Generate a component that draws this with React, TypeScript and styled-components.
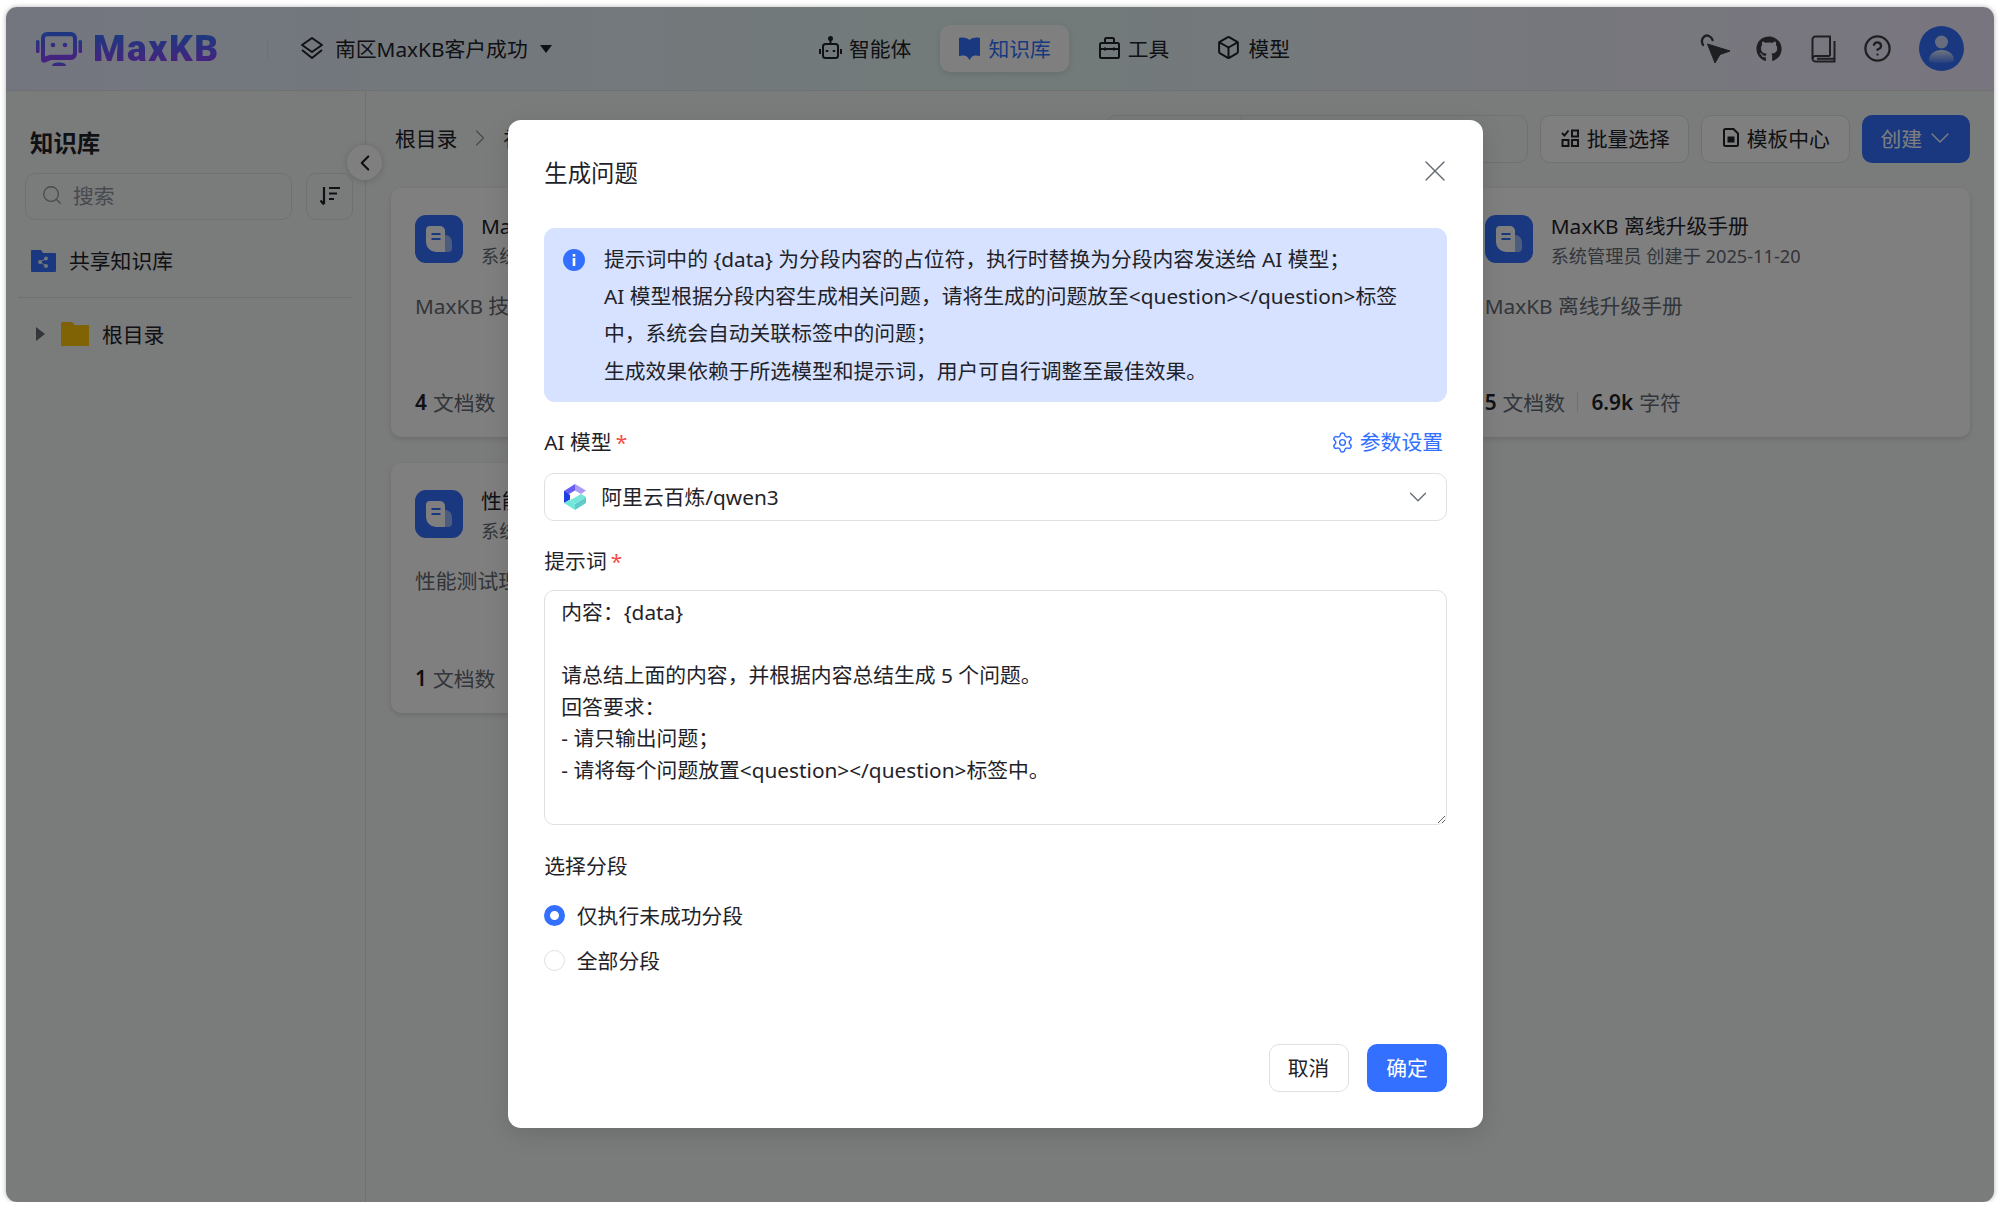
import React from "react";
import styled, { createGlobalStyle } from "styled-components";
import { FaGithub } from "react-icons/fa";
import { ChevronDown, ChevronLeft, ChevronRight, CircleHelp, Box, Search, Settings, X } from "lucide-react";

const Global = createGlobalStyle`
  html, body { margin: 0; padding: 0; background: #fff; }
  body { font-family: "Noto Sans", "Noto Sans CJK SC", sans-serif; color: #1f2329; font-size: 20.8px; }
  * { box-sizing: border-box; }
`;

const Frame = styled.div`
  position: relative;
  margin: 7px 6px 0;
  width: 1988px;
  height: 1195px;
  border-radius: 11px;
  overflow: hidden;
  background: #f5f6f7;
  box-shadow: 0 0 5px rgba(0, 0, 0, 0.3);
  display: flex;
  flex-direction: column;
`;

const Header = styled.header`
  height: 84px;
  flex: none;
  display: flex;
  align-items: center;
  padding: 0 30px;
  border-bottom: 1px solid #dee0e3;
  background: linear-gradient(90deg, #e8edff 0%, #e5f5f4 50%, #f3ebff 100%);
`;

const LogoMark = styled.svg`
  width: 46px;
  height: 34px;
  flex: none;
`;

const LogoText = styled.span`
  margin-left: 11px;
  width: 126px;
  font-family: Roboto, "Noto Sans", sans-serif;
  font-size: 37px;
  font-weight: 900;
  line-height: 40px;
  letter-spacing: 1.6px;
  white-space: nowrap;
  background: linear-gradient(180deg, #3a72ff 15%, #9640ff 90%);
  -webkit-background-clip: text;
  background-clip: text;
  color: transparent;
`;

const HeadDivider = styled.span`
  margin-left: 48px;
  width: 1px;
  height: 20px;
  background: #dee0e3;
`;

const Workspace = styled.div`
  margin-left: 32px;
  padding-bottom: 2px;
  display: flex;
  align-items: center;
  gap: 11px;
  width: 252px;
  white-space: nowrap;
`;

const Caret = styled.span`
  margin: 2px 0 0 1px;
  width: 0;
  height: 0;
  border-left: 6.5px solid transparent;
  border-right: 6.5px solid transparent;
  border-top: 8px solid #1f2329;
`;

const Nav = styled.nav`
  margin-left: 248.5px;
  display: flex;
  gap: 10px;
`;

const NavItem = styled.a<{ $active?: boolean }>`
  height: 47px;
  padding: 0 18.5px 2px;
  display: flex;
  align-items: center;
  gap: 7px;
  border-radius: 10px;
  white-space: nowrap;
  color: ${(p) => (p.$active ? "#3370ff" : "#1f2329")};
  background: ${(p) => (p.$active ? "#ffffff" : "transparent")};
  box-shadow: ${(p) => (p.$active ? "0 2px 6px rgba(31,35,41,.12)" : "none")};
`;

const NavIcon = styled.svg`
  width: 23px;
  height: 24px;
  flex: none;
`;

const HeadRight = styled.div`
  margin-left: auto;
  display: flex;
  align-items: center;
`;

const HeadIcon = styled.span<{ $gap: number }>`
  display: flex;
  margin-left: ${(p) => p.$gap}px;
  color: #3b3e43;
`;

const Avatar = styled.span`
  margin-left: 27px;
  width: 45px;
  height: 45px;
  border-radius: 50%;
  background: #3370ff;
  display: flex;
  overflow: hidden;
`;

const Body = styled.div`
  flex: 1;
  display: flex;
  min-height: 0;
`;

const Sidebar = styled.aside`
  position: relative;
  width: 360px;
  flex: none;
  padding: 37px 0 0;
  border-right: 1px solid #dee0e3;
`;

const SideTitle = styled.h2`
  margin: 0 0 15px 24px;
  font-size: 23.4px;
  line-height: 30px;
  font-weight: 700;
`;

const SearchRow = styled.div`
  display: flex;
  gap: 14px;
  padding-left: 19px;
`;

const SearchBox = styled.div`
  width: 267px;
  height: 46.5px;
  border: 1.3px solid #dee0e3;
  border-radius: 10px;
  display: flex;
  align-items: center;
  gap: 10px;
  padding: 0 0 2px 15px;
  color: #8f959e;
`;

const SortButton = styled.div`
  width: 47px;
  height: 46.5px;
  border: 1.3px solid #dee0e3;
  border-radius: 10px;
  display: flex;
  align-items: center;
  justify-content: center;
`;

const CollapseButton = styled.div`
  position: absolute;
  right: -17px;
  top: 54px;
  width: 35px;
  height: 35px;
  border-radius: 50%;
  background: #fff;
  box-shadow: 0 1px 6px rgba(31, 35, 41, 0.2);
  display: flex;
  align-items: center;
  justify-content: center;
  z-index: 1;
`;

const ShareRow = styled.div`
  margin-top: 21px;
  padding: 0 0 1px 25px;
  height: 40px;
  display: flex;
  align-items: center;
  gap: 13px;
`;

const SideDivider = styled.div`
  height: 1px;
  margin: 16px 12px 0;
  background: #dee0e3;
`;

const TreeRow = styled.div`
  margin-top: 16px;
  padding-left: 30px;
  height: 40px;
  display: flex;
  align-items: center;
`;

const TreeArrow = styled.span`
  width: 0;
  height: 0;
  border-top: 7px solid transparent;
  border-bottom: 7px solid transparent;
  border-left: 9px solid #646a73;
  margin-right: 16px;
`;

const FolderIcon = styled.svg`
  margin-right: 13px;
`;

const Main = styled.main`
  flex: 1;
  min-width: 0;
  padding: 24px 24px 0 25px;
`;

const Toolbar = styled.div`
  height: 47.5px;
  display: flex;
  align-items: center;
  margin-bottom: 25px;
`;

const Crumb = styled.div`
  margin-left: 4px;
  padding-bottom: 2px;
  display: flex;
  align-items: center;
  gap: 9px;
  white-space: nowrap;
`;

const ToolRight = styled.div`
  margin-left: auto;
  display: flex;
  gap: 12.5px;
`;

const FilterGroup = styled.div`
  width: 422px;
  height: 47.5px;
  border: 1.3px solid #dee0e3;
  border-radius: 10px;
  display: flex;
`;

const FilterLeft = styled.div`
  width: 135px;
  border-right: 1.3px solid #dee0e3;
`;

const ToolButton = styled.button`
  height: 47.5px;
  width: 148.5px;
  padding: 0 0 2px 2px;
  border: 1.3px solid #dee0e3;
  border-radius: 10px;
  background: #fff;
  display: flex;
  align-items: center;
  justify-content: center;
  gap: 8px;
  font: inherit;
  color: #1f2329;
`;

const CreateButton = styled.button`
  height: 47.5px;
  width: 108px;
  padding: 0 0 2px 18.5px;
  border: 0;
  border-radius: 10px;
  background: #3370ff;
  color: #fff;
  display: flex;
  align-items: center;
  justify-content: flex-start;
  gap: 2.4px;
  font: inherit;
`;

const CardGrid = styled.div`
  display: grid;
  grid-template-columns: repeat(3, 1fr);
  grid-auto-rows: 249.5px;
  gap: 26px 25.5px;
`;

const Card = styled.article`
  background: #fff;
  border-radius: 10px;
  box-shadow: 0 2px 5px rgba(31, 35, 41, 0.14);
  padding: 27px 24px 21px;
  display: flex;
  flex-direction: column;
`;

const CardHead = styled.div`
  display: flex;
  gap: 18px;
  height: 48px;
`;

const CardIcon = styled.div`
  width: 48px;
  height: 48px;
  border-radius: 11px;
  background: #3370ff;
  display: flex;
  align-items: center;
  justify-content: center;
  flex: none;
`;

const CardTitle = styled.div`
  line-height: 26px;
  margin-top: -2px;
  white-space: nowrap;
`;

const CardSub = styled.div`
  margin-top: 5px;
  font-size: 18.2px;
  line-height: 24px;
  color: #646a73;
  white-space: nowrap;
`;

const CardDesc = styled.div`
  margin-top: 28px;
  line-height: 30px;
  color: #646a73;
  white-space: nowrap;
`;

const CardFoot = styled.div`
  margin-top: auto;
  height: 28px;
  display: flex;
  align-items: center;
  color: #646a73;
  white-space: nowrap;
`;

const Num = styled.b`
  color: #1f2329;
  font-weight: 600;
  margin-right: 6px;
`;

const FootSep = styled.span`
  width: 1px;
  height: 20px;
  margin: 0 13px 0 12.5px;
  background: #dee0e3;
`;

const Overlay = styled.div`
  position: absolute;
  inset: 0;
  z-index: 5;
  background: rgba(0, 0, 0, 0.5);
  padding: 113px 0 0 502px;
`;

const Dialog = styled.section`
  position: relative;
  width: 975px;
  height: 1007.5px;
  background: #fff;
  border-radius: 13px;
  padding: 38px 36px 36px 36.3px;
  display: flex;
  flex-direction: column;
  box-shadow: 0 6px 24px rgba(0, 0, 0, 0.12);
`;

const DialogTitle = styled.h3`
  margin: 0 0 40px;
  font-size: 23.4px;
  line-height: 30px;
  font-weight: 400;
`;

const CloseButton = styled.span`
  position: absolute;
  right: 30px;
  top: 33px;
  display: flex;
  color: #646a73;
`;

const Alert = styled.div`
  height: 173.5px;
  flex: none;
  border-radius: 11px;
  background: #d6e2ff;
  padding: 12.5px 0 0 18.7px;
  display: flex;
  gap: 19px;
  line-height: 37.4px;
  white-space: nowrap;
`;

const AlertIcon = styled.svg`
  width: 22px;
  height: 22px;
  flex: none;
  margin-top: 8px;
`;

const LabelRow = styled.div<{ $top: number; $bottom: number }>`
  margin-top: ${(p) => p.$top}px;
  margin-bottom: ${(p) => p.$bottom}px;
  line-height: 30px;
  height: 30px;
  flex: none;
  display: flex;
  justify-content: space-between;
`;

const Star = styled.span`
  color: #f54a45;
  margin-left: 4px;
`;

const ParamLink = styled.span`
  display: flex;
  align-items: center;
  gap: 6px;
  color: #3370ff;
  margin-right: 4px;
`;

const SelectBox = styled.div`
  height: 47.7px;
  flex: none;
  border: 1.3px solid #dee0e3;
  border-radius: 10px;
  display: flex;
  align-items: center;
  padding: 0 13px 0 18px;
  gap: 14px;
`;

const SelectIcon = styled.svg`
  width: 24px;
  height: 26px;
  flex: none;
`;

const SelectText = styled.span`
  flex: 1;
  padding-bottom: 2px;
`;

const PromptArea = styled.textarea`
  display: block;
  flex: none;
  width: 100%;
  height: 235px;
  border: 1.3px solid #dee0e3;
  border-radius: 10px;
  padding: 6px 16px;
  font: inherit;
  line-height: 31.6px;
  color: #1f2329;
  resize: vertical;
  outline: none;
`;

const RadioRow = styled.label`
  height: 45px;
  flex: none;
  display: flex;
  align-items: center;
  gap: 11.5px;
`;

const RadioDot = styled.span<{ $on?: boolean }>`
  width: 21px;
  height: 21px;
  border-radius: 50%;
  border: ${(p) => (p.$on ? "6.5px solid #3370ff" : "1.3px solid #dee0e3")};
  background: #fff;
`;

const DialogFoot = styled.div`
  margin-top: auto;
  display: flex;
  justify-content: flex-end;
  gap: 18.5px;
`;

const FootButton = styled.button<{ $primary?: boolean }>`
  width: 80px;
  height: 47.7px;
  padding: 0 0 1px;
  border-radius: 10px;
  border: ${(p) => (p.$primary ? "0" : "1.3px solid #dee0e3")};
  background: ${(p) => (p.$primary ? "#3370ff" : "#fff")};
  color: ${(p) => (p.$primary ? "#fff" : "#1f2329")};
  font: inherit;
`;

const DocIcon = () => (
  <svg width="26" height="26" viewBox="0 0 26 26">
    <path d="M19 9a7 7 0 0 1 7 7v6a4 4 0 0 1-4 4h-3z" fill="#fff" opacity="0.5" />
    <path d="M0 4a4 4 0 0 1 4-4h10a5 5 0 0 1 5 5v21h-9A10 10 0 0 1 0 16z" fill="#fff" />
    <path d="M5.500 8h9M5.500 13h9" stroke="#3370ff" strokeWidth="2.200" />
  </svg>
);

const cardsData = [
  { t: "MaxKB 技术文档", n: "4", c: "12.6k" },
  null,
  { t: "MaxKB 离线升级手册", n: "5", c: "6.9k" },
  { t: "性能测试理论", n: "1", c: "3.2k" },
];

export default function App() {
  return (
    <>
      <Global />
      <Frame>
        <Header>
          <LogoMark viewBox="0 0 46 34">
            <defs>
              <linearGradient id="lg" x1="0" y1="0" x2="0" y2="1">
                <stop offset="0" stopColor="#3a72ff" />
                <stop offset="1" stopColor="#9640ff" />
              </linearGradient>
            </defs>
            <path fillRule="evenodd" d="M11 0h24a6 6 0 0 1 6 6v16a6 6 0 0 1-6 6H15l-6 2.500A3 3 0 0 1 5 28V6a6 6 0 0 1 6-6zm0 4.200A2 2 0 0 0 9 6.200v18.300l5-1.700h21a2 2 0 0 0 2-2V6.200a2 2 0 0 0-2-2z" fill="url(#lg)" />
            <rect x="0" y="8" width="3.500" height="13" rx="1.500" fill="url(#lg)" />
            <rect x="42.500" y="8" width="3.500" height="13" rx="1.500" fill="url(#lg)" />
            <circle cx="17" cy="13" r="2.300" fill="url(#lg)" />
            <circle cx="29" cy="13" r="2.300" fill="url(#lg)" />
            <path d="M16 34c0-2.500 3-3.500 7-3.500s7 1 7 3.500z" fill="url(#lg)" />
          </LogoMark>
          <LogoText>MaxKB</LogoText>
          <HeadDivider />
          <Workspace>
            <svg width="24" height="24" viewBox="0 0 24 24" fill="none" stroke="#1f2329" strokeWidth="2" strokeLinejoin="round">
              <path d="M12 2 22 9l-10 7L2 9z" />
              <path d="m2 14 10 8 10-8" />
            </svg>
            南区MaxKB客户成功
            <Caret />
          </Workspace>
          <Nav>
            <NavItem>
              <NavIcon viewBox="0 0 23 24" fill="none" stroke="#1f2329" strokeWidth="2">
                <rect x="4" y="8" width="15" height="14" rx="2.500" />
                <path d="M11.500 8V3M1 13v5M22 13v5" />
                <circle cx="11.500" cy="2.500" r="1.500" fill="#1f2329" />
                <path d="M8 14v2M15 14v2" strokeWidth="2.500" />
              </NavIcon>
              智能体
            </NavItem>
            <NavItem $active>
              <NavIcon viewBox="0 0 23 24" fill="#3370ff">
                <path d="M1 2C4.500 1 8.500 1.500 11.500 4 14.500 1.500 18.500 1 22 2v18c-4-1-7-.5-8.500 1l-2 3-2-3C8 19.500 5 19 1 20z" />
              </NavIcon>
              知识库
            </NavItem>
            <NavItem>
              <NavIcon viewBox="0 0 23 24" fill="none" stroke="#1f2329" strokeWidth="2">
                <rect x="2" y="7" width="19" height="15" rx="1.500" />
                <path d="M7 7V3.500A1.500 1.500 0 0 1 8.500 2h6A1.500 1.500 0 0 1 16 3.500V7M2 13h19M7 11.500v3M16 11.500v3" />
              </NavIcon>
              工具
            </NavItem>
            <NavItem>
              <Box size={25} strokeWidth={1.9} color="#1f2329" />
              模型
            </NavItem>
          </Nav>
          <HeadRight>
            <HeadIcon $gap={0}>
              <svg width="30" height="30" viewBox="0 0 30 30" fill="none">
                <path d="M7.500 10 30 17l-10 3.500L15 29z" fill="#3b3e43" stroke="#3b3e43" strokeLinejoin="round" />
                <path d="M3 11C0 6 4 0 9 2c2 .8 3 2 3.500 4" stroke="#3b3e43" strokeWidth="2.400" strokeLinecap="round" />
              </svg>
            </HeadIcon>
            <HeadIcon $gap={26}>
              <FaGithub size={26} />
            </HeadIcon>
            <HeadIcon $gap={29}>
              <svg width="25" height="28" viewBox="0 0 25 28" fill="none" stroke="currentColor" strokeWidth="2">
                <path d="M19 21V1.500H4.500A3 3 0 0 0 1.500 4.500v19a3 3 0 0 0 3 3h19V6" />
                <path d="M19 21H4.500a2.800 2.800 0 0 0-3 2.600" />
                <path d="M6 23.800h17.500" />
              </svg>
            </HeadIcon>
            <HeadIcon $gap={27}>
              <CircleHelp size={29} strokeWidth={1.9} />
            </HeadIcon>
            <Avatar>
              <svg width="45" height="45" viewBox="0 0 45 45">
                <defs>
                  <linearGradient id="av" x1="0" y1="0" x2="0" y2="1">
                    <stop offset="0" stopColor="#fff" stopOpacity="0.85" />
                    <stop offset="1" stopColor="#fff" stopOpacity="0.1" />
                  </linearGradient>
                </defs>
                <circle cx="22.500" cy="16" r="6.500" fill="#fff" fillOpacity="0.75" />
                <path d="M10 35c0-7 5-11 12.500-11S35 28 35 35c-6 3-19 3-25 0z" fill="url(#av)" />
              </svg>
            </Avatar>
          </HeadRight>
        </Header>
        <Body>
          <Sidebar>
            <SideTitle>知识库</SideTitle>
            <SearchRow>
              <SearchBox>
                <Search size={22} strokeWidth={1.4} />
                搜索
              </SearchBox>
              <SortButton>
                <svg width="22" height="22" viewBox="0 0 22 22" fill="none" stroke="#1f2329" strokeWidth="2.200">
                  <path d="M5 2v17M1.500 15.500 5 19.500M10 3h11M10 8.500h8M10 14h5" />
                </svg>
              </SortButton>
            </SearchRow>
            <CollapseButton>
              <ChevronLeft size={26} strokeWidth={2} color="#1f2329" />
            </CollapseButton>
            <ShareRow>
              <svg width="25" height="25" viewBox="0 0 25 25">
                <path d="M0 3a1 1 0 0 1 1-1h9l2 3h12a1 1 0 0 1 1 1v17a1 1 0 0 1-1 1H1a1 1 0 0 1-1-1z" fill="#3370ff" />
                <g fill="#fff" opacity="0.85">
                  <circle cx="9" cy="14" r="2" />
                  <circle cx="15" cy="10.500" r="2" />
                  <circle cx="15" cy="18" r="2" />
                </g>
                <path d="M9 14l6-3.500M9 14l6 4" stroke="#fff" strokeWidth="1" opacity="0.85" />
              </svg>
              共享知识库
            </ShareRow>
            <SideDivider />
            <TreeRow>
              <TreeArrow />
              <FolderIcon width="28" height="24" viewBox="0 0 28 24">
                <path d="M0 1.500A1.500 1.500 0 0 1 1.500 0h9a2 2 0 0 1 2 1.500L13 3h15v21H0z" fill="#ffbe14" />
                <path d="M0 3h28v21H0z" fill="#ffc60a" />
              </FolderIcon>
              根目录
            </TreeRow>
          </Sidebar>
          <Main>
            <Toolbar>
              <Crumb>
                根目录
                <ChevronRight size={28} strokeWidth={1} color="#8f959e" />
                祖目录
              </Crumb>
              <ToolRight>
                <FilterGroup>
                  <FilterLeft />
                </FilterGroup>
                <ToolButton>
                  <svg width="18" height="18" viewBox="0 0 18 18" fill="none" stroke="#1f2329" strokeWidth="2">
                    <path d="m1 4 2.500 2.500L7.500 1.500" />
                    <rect x="11" y="1.500" width="6" height="6" />
                    <rect x="1.500" y="11" width="6" height="6" />
                    <rect x="11" y="11" width="6" height="6" />
                  </svg>
                  批量选择
                </ToolButton>
                <ToolButton>
                  <svg width="16" height="19" viewBox="0 0 16 19" fill="none" stroke="#1f2329" strokeWidth="2">
                    <path d="M1 2.500A1.500 1.500 0 0 1 2.500 1h8L15 5.500v11a1.500 1.500 0 0 1-1.500 1.500h-11A1.500 1.500 0 0 1 1 16.500z" />
                    <rect x="4.500" y="8.500" width="7" height="6" fill="#1f2329" stroke="none" />
                  </svg>
                  模板中心
                </ToolButton>
                <CreateButton>
                  创建
                  <ChevronDown size={32} strokeWidth={1} />
                </CreateButton>
              </ToolRight>
            </Toolbar>
            <CardGrid>
              {cardsData.map((c, i) =>
                c ? (
                  <Card key={c.t}>
                    <CardHead>
                      <CardIcon>
                        <DocIcon />
                      </CardIcon>
                      <div>
                        <CardTitle>{c.t}</CardTitle>
                        <CardSub>系统管理员 创建于 2025-11-20</CardSub>
                      </div>
                    </CardHead>
                    <CardDesc>{c.t}</CardDesc>
                    <CardFoot>
                      <Num>{c.n}</Num>文档数
                      <FootSep />
                      <Num>{c.c}</Num>字符
                    </CardFoot>
                  </Card>
                ) : (
                  <Card key={i} />
                )
              )}
            </CardGrid>
          </Main>
        </Body>
        <Overlay>
          <Dialog>
            <DialogTitle>生成问题</DialogTitle>
            <CloseButton>
              <X size={36} strokeWidth={0.9} />
            </CloseButton>
            <Alert>
              <AlertIcon viewBox="0 0 22 22">
                <circle cx="11" cy="11" r="11" fill="#3370ff" />
                <rect x="9.700" y="9" width="2.600" height="8" fill="#fff" />
                <rect x="9.700" y="5" width="2.600" height="2.600" fill="#fff" />
              </AlertIcon>
              <div>
                提示词中的 {"{data}"} 为分段内容的占位符，执行时替换为分段内容发送给 AI 模型；
                <br />
                AI 模型根据分段内容生成相关问题，请将生成的问题放至&lt;question&gt;&lt;/question&gt;标签
                <br />
                中，系统会自动关联标签中的问题；
                <br />
                生成效果依赖于所选模型和提示词，用户可自行调整至最佳效果。
              </div>
            </Alert>
            <LabelRow $top={25.7} $bottom={16}>
              <span>
                AI 模型<Star>*</Star>
              </span>
              <ParamLink>
                <Settings size={23} strokeWidth={1.5} />
                参数设置
              </ParamLink>
            </LabelRow>
            <SelectBox>
              <SelectIcon viewBox="0 0 24 26">
                <path d="M12 0 1 7v6l11-6.500z" fill="#6a5cf5" />
                <path d="M12 0l11 6.500L18 10 12 6.500z" fill="#a89cf5" />
                <path d="M1 7v12l6-3.500V11z" fill="#1c3fe0" />
                <path d="M1 19l11 7 0-6-5-4z" fill="#72e6da" />
                <path d="M12 26l11-7v-6l-11 7z" fill="#5fcaca" />
                <path d="M12 20l11-7-5-3-6 3.500L7 16z" fill="#72e6da" />
              </SelectIcon>
              <SelectText>阿里云百炼/qwen3</SelectText>
              <ChevronDown size={30} strokeWidth={1} color="#646a73" />
            </SelectBox>
            <LabelRow $top={25} $bottom={14}>
              <span>
                提示词<Star>*</Star>
              </span>
            </LabelRow>
            <PromptArea
              readOnly
              defaultValue={"内容：{data}\n\n请总结上面的内容，并根据内容总结生成 5 个问题。\n回答要求：\n- 请只输出问题；\n- 请将每个问题放置<question></question>标签中。"}
            />
            <LabelRow $top={25.7} $bottom={12}>
              <span>选择分段</span>
            </LabelRow>
            <RadioRow>
              <RadioDot $on />
              仅执行未成功分段
            </RadioRow>
            <RadioRow>
              <RadioDot />
              全部分段
            </RadioRow>
            <DialogFoot>
              <FootButton>取消</FootButton>
              <FootButton $primary>确定</FootButton>
            </DialogFoot>
          </Dialog>
        </Overlay>
      </Frame>
    </>
  );
}
